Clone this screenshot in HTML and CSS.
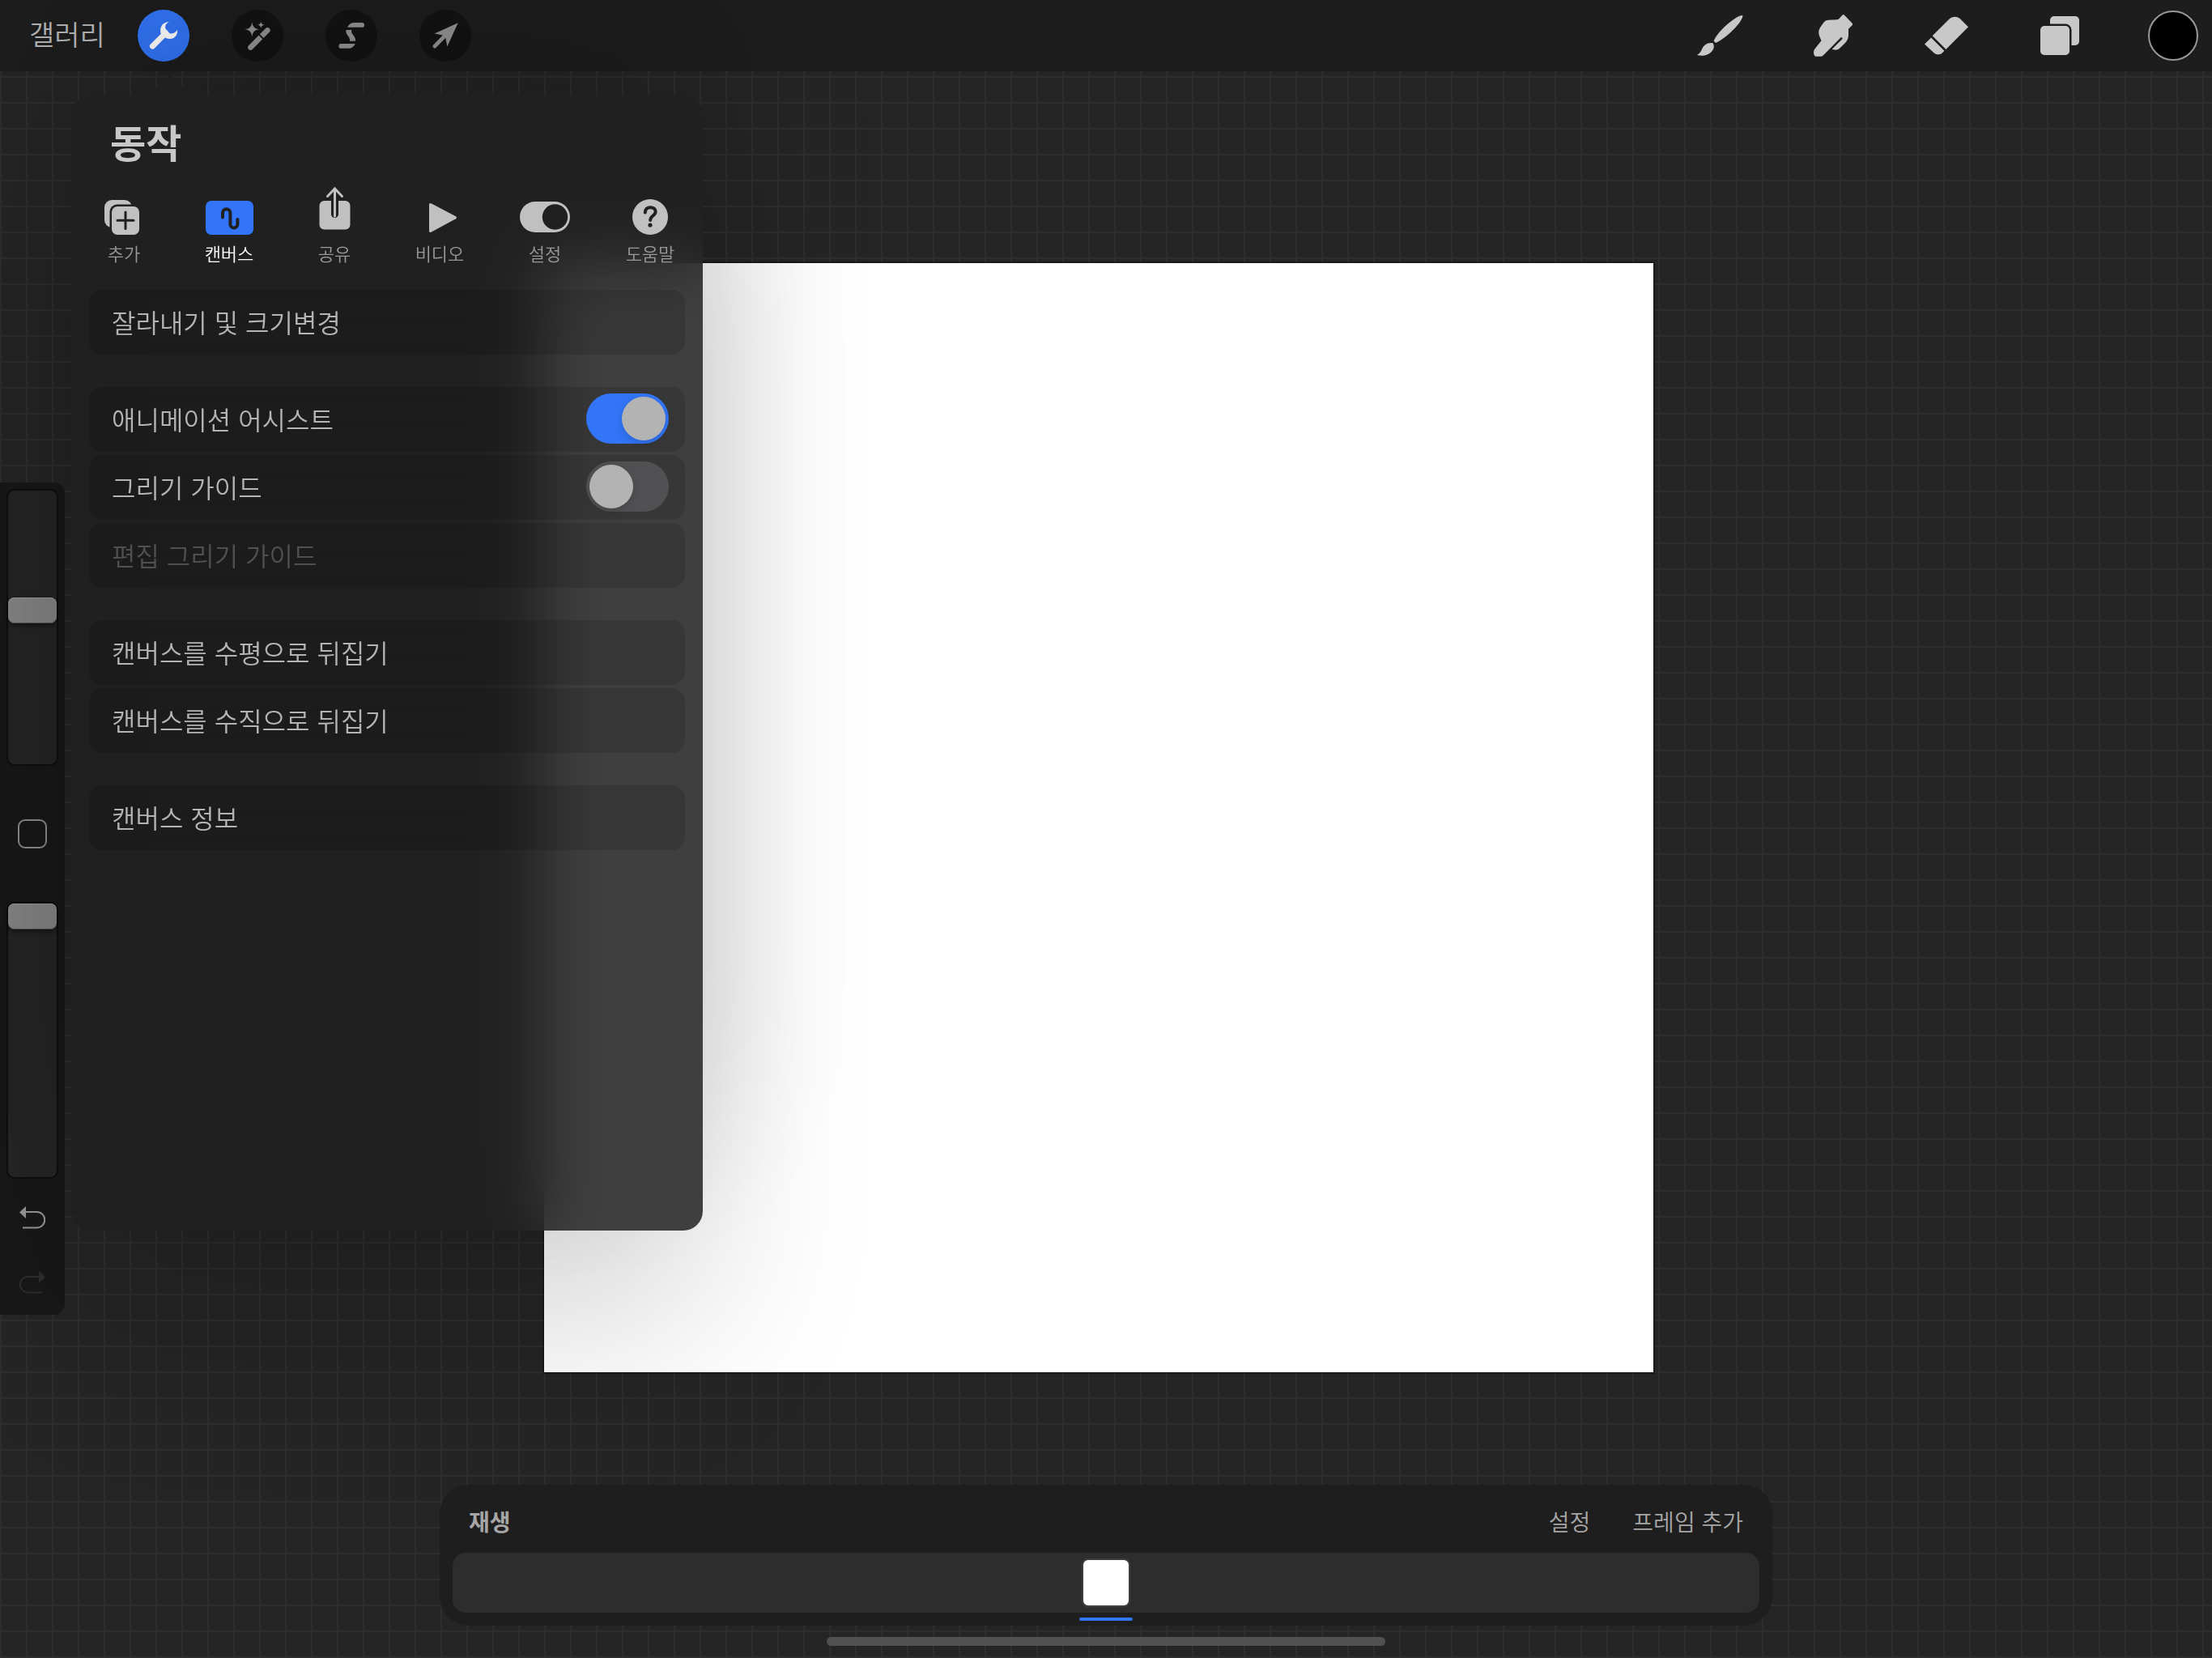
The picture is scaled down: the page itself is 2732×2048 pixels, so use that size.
FILE: index.html
```html
<!DOCTYPE html>
<html lang="ko">
<head>
<meta charset="utf-8">
<meta name="viewport" content="width=device-width, initial-scale=1">
<title>동작</title>
<link rel="stylesheet" href="styles.css">
</head>
<body>
<header class="topbar">
  <button class="gallery" type="button">갤러리</button>
  <nav class="tools">
    <button class="tool tool-active" type="button" aria-label="동작">
      <svg viewBox="0 0 64 64"><path d="M39 15C35 16.5 33.5 20 34.5 23.5L40 29.5C43 29.8 47 28.5 48.8 25C50 30 46.5 35.8 40 36C37.5 36.2 35.5 35.4 33.8 34.6L21 47.6A3.6 3.6 0 0 1 16 42.4L28.8 29.8C27 24 28.5 15.5 39 15Z"/></svg>
    </button>
    <button class="tool" type="button" aria-label="조정">
      <svg viewBox="0 0 64 64"><path d="M25.3 15.5Q26 23.6 34 24.3Q26 25 25.3 33.1Q24.6 25 16.5 24.3Q24.6 23.6 25.3 15.5ZM36.3 14.5Q36.7 18.3 40.4 18.7Q36.7 19.1 36.3 22.9Q35.9 19.1 32.2 18.7Q35.9 18.3 36.3 14.5Z"/><path class="wand" d="M23.4 46.6L44.4 25.4"/><path class="wand-gap" d="M33.5 30.2L39.8 36.5"/></svg>
    </button>
    <button class="tool" type="button" aria-label="선택">
      <svg viewBox="0 0 64 64"><path d="M27 21.8C29 18 31.5 16 35.5 16H45.2A2.9 2.9 0 0 1 45.2 21.8ZM25.4 25H32.3C31.8 27 32.2 28.4 33.5 30.3C36 33.8 37.3 35.5 37 38.8H30C30.2 36.5 29.8 35 28.3 33C26 30 25 28 25.4 25ZM19.3 42H36.8C35 45.8 32.5 47.8 28.5 47.8H19.3A2.9 2.9 0 0 1 19.3 42Z"/></svg>
    </button>
    <button class="tool" type="button" aria-label="변형">
      <svg viewBox="0 0 64 64"><path d="M47.7 16.2L34.4 45.4L32.3 34.8L20.6 46.8A2.4 2.4 0 0 1 17.2 43.4L28.9 31.6L18.6 29.6Z"/></svg>
    </button>
  </nav>
  <nav class="brushes">
    <button class="brush" type="button" aria-label="그리기">
      <svg viewBox="0 0 64 64"><path d="M60.3 7C61 9.5 57 16 51 22.5C43 31 34 38 27 41L24.5 38.6C27 33 33 25 42 17.5C49 11.5 57 6.5 60.3 7ZM23.5 41.2C26.5 46 24 51 18.5 54.5C14 57.3 8 57.3 4 56C6.5 54.5 8 53 9.5 50C12 43.5 17 40.3 23.5 41.2Z"/></svg>
    </button>
    <button class="brush" type="button" aria-label="스머지">
      <svg viewBox="0 0 64 64"><path d="M43.6 6.6Q44.7 5.6 45.8 6.6L55.6 16.8Q56.5 18 55.6 19.2L51 23.8V31.5C51 36 49 39 46 42L39.5 48.3C37.5 50 33 50 30.7 48.7L43.2 36.2C44.2 35 42.7 33.6 41.4 34.6L20 56.2Q18.5 57.8 16.5 57.8H11Q9 57.8 8.5 55.5C7.8 53 7.8 51 9 49L17.5 38.3C16 34 14.3 32 14.3 28.5C14.3 24 16 22 18.5 18.5C21 15 22 12.9 26.3 12.7L36.5 12.2Q38.3 12.1 39.5 10.9Z"/></svg>
    </button>
    <button class="brush" type="button" aria-label="지우기">
      <svg viewBox="0 0 64 64"><path d="M59 21.3L31.4 49L14.7 32.3L35 12C39.5 7.8 45.5 7.8 49.5 11.7ZM13.1 34.5L29.4 50.8L27 53.2C24 56 19.5 56 16.5 53.3L5 42.4Z"/></svg>
    </button>
    <button class="brush" type="button" aria-label="레이어">
      <svg viewBox="0 0 64 64"><rect x="20" y="8" width="36" height="36" rx="5"/><rect class="layer-gap" x="7" y="19" width="38" height="38" rx="6"/><rect x="8" y="20" width="36" height="36" rx="5"/></svg>
    </button>
    <button class="brush" type="button" aria-label="색상"><span class="swatch"></span></button>
  </nav>
</header>

<main class="stage">
  <div class="canvas"></div>
</main>

<aside class="sidebar">
  <input class="slider" type="range" min="0" max="100" value="57" aria-label="브러시 크기">
  <button class="modify" type="button" aria-label="수정"></button>
  <input class="slider" type="range" min="0" max="100" value="100" aria-label="불투명도">
  <div class="history">
    <button class="step" type="button" aria-label="실행 취소">
      <svg viewBox="0 0 32 28"><path class="step-line" d="M6 7H21.5A9 9 0 0 1 21.5 26.5H4"/><path d="M0 7.5L8 0V15Z"/></svg>
    </button>
    <button class="step" type="button" aria-label="다시 실행" disabled>
      <svg viewBox="0 0 32 28"><path class="step-line" d="M26 7H10.5A9 9 0 0 0 10.5 26.5H28"/><path d="M32 7.5L24 0V15Z"/></svg>
    </button>
  </div>
</aside>

<section class="popover">
  <h1 class="title">동작</h1>
  <nav class="tabs">
    <button class="tab" type="button">
      <svg viewBox="0 0 64 64"><rect x="8" y="17" width="34" height="34" rx="9"/><rect class="knock" x="14.5" y="22.5" width="39" height="40" rx="9"/><rect x="17" y="25" width="34" height="35" rx="7"/><path class="plus" d="M34 32V52.5M24 42.3H44"/></svg>
      추가
    </button>
    <button class="tab tab-active" type="button">
      <svg viewBox="0 0 64 64"><rect x="3" y="18" width="59" height="42" rx="7"/><path class="squiggle" d="M24 38.5V33A4.7 4.7 0 0 1 33.4 33V47A4.5 4.5 0 0 0 42.4 47V41"/></svg>
      캔버스
    </button>
    <button class="tab" type="button">
      <svg viewBox="0 0 64 64"><rect x="13.5" y="18" width="38" height="35.5" rx="6"/><path class="shaft-gap" d="M32.5 16V34.5"/><path class="shaft" d="M32.5 37V3M23.5 12.5L32.5 3L41.5 12.5"/></svg>
      공유
    </button>
    <button class="tab" type="button">
      <svg viewBox="0 0 64 64"><path d="M19 23Q19 20 22 21.5L52 37.3Q54 38.8 52 40.3L22 56.5Q19 58 19 55Z"/></svg>
      비디오
    </button>
    <button class="tab" type="button">
      <svg viewBox="0 0 64 64"><rect x="1" y="19" width="62" height="38" rx="19"/><circle class="knock" cx="44.5" cy="38" r="15.7"/></svg>
      설정
    </button>
    <button class="tab" type="button">
      <svg viewBox="0 0 64 64"><circle cx="32" cy="38" r="22"/><path class="query" d="M25.8 32.5C25.8 28.3 28.5 26.2 32.2 26.2C36 26.2 38.7 28.3 38.7 31.6C38.7 36.2 32.2 36.5 32.2 42"/><circle class="knock" cx="32" cy="48" r="2.6"/></svg>
      도움말
    </button>
  </nav>
  <div class="groups">
    <div class="group">
      <button class="row" type="button">잘라내기 및 크기변경</button>
    </div>
    <div class="group">
      <label class="row">애니메이션 어시스트<input class="switch" type="checkbox" role="switch" checked></label>
      <label class="row">그리기 가이드<input class="switch" type="checkbox" role="switch"></label>
      <button class="row" type="button" disabled>편집 그리기 가이드</button>
    </div>
    <div class="group">
      <button class="row" type="button">캔버스를 수평으로 뒤집기</button>
      <button class="row" type="button">캔버스를 수직으로 뒤집기</button>
    </div>
    <div class="group">
      <button class="row" type="button">캔버스 정보</button>
    </div>
  </div>
</section>

<section class="timeline">
  <div class="timeline-bar">
    <button class="timeline-action play" type="button">재생</button>
    <button class="timeline-action" type="button">설정</button>
    <button class="timeline-action" type="button">프레임 추가</button>
  </div>
  <div class="track">
    <button class="frame" type="button" aria-label="프레임 1"></button>
  </div>
</section>
<div class="home-indicator"></div>
</body>
</html>
```
FILE: styles.css
```css
:root {
  --bar: #1d1d1d;
  --panel: #202020;
  --icon: #c8c8c8;
  --accent: #3275f8;
}

* {
  box-sizing: border-box;
}

body {
  position: relative;
  display: flex;
  flex-direction: column;
  min-height: 100vh;
  margin: 0;
  overflow: hidden;
  color: #b4b4b4;
  font-family: "Noto Sans CJK KR", "Noto Sans", sans-serif;
  background-color: #252525;
  background-image:
    linear-gradient(to right, #2e2e2e 2px, transparent 2px),
    linear-gradient(to bottom, #2e2e2e 2px, transparent 2px);
  background-size: 32px 32px;
  background-position: 0 0, 0 30px;
}

button {
  margin: 0;
  padding: 0;
  border: 0;
  background: none;
  color: inherit;
  font: inherit;
}

svg {
  display: block;
  fill: currentColor;
}

/* Top bar */

.topbar {
  display: flex;
  align-items: center;
  height: 88px;
  padding: 0 16px 0 36px;
  background: var(--bar);
}

.gallery {
  padding-bottom: 4px;
  font-size: 34px;
  line-height: 48px;
  font-weight: 350;
}

.tools {
  display: flex;
  gap: 52px;
  margin-left: 40px;
}

.tool {
  width: 64px;
  height: 64px;
  border-radius: 50%;
  background: #131313;
  color: #949494;
}

.tool-active {
  background: var(--accent);
  color: #fff;
}

.wand {
  fill: none;
  stroke: currentColor;
  stroke-width: 6.5;
  stroke-linecap: round;
}

.wand-gap {
  stroke: #131313;
  stroke-width: 1.8;
}

.brushes {
  display: flex;
  gap: 76px;
  margin-left: auto;
}

.brush {
  display: flex;
  align-items: center;
  justify-content: center;
  width: 64px;
  height: 64px;
  color: var(--icon);
}

.brush svg {
  width: 64px;
}

.layer-gap {
  fill: none;
  stroke: var(--bar);
  stroke-width: 3;
}

.swatch {
  width: 62px;
  height: 62px;
  border: 2px solid #999;
  border-radius: 50%;
  background: #000;
}

/* Drawing area */

.stage {
  display: flex;
  flex: 1;
  align-items: flex-start;
  justify-content: center;
  padding: 237px 18px 0 0;
}

.canvas {
  width: 1370px;
  max-width: 100%;
  aspect-ratio: 1;
  background: #fff;
  box-shadow: 0 0 0 2px rgba(0, 0, 0, 0.35);
}

/* Side bar */

.sidebar {
  position: absolute;
  top: 596px;
  left: 0;
  display: flex;
  flex-direction: column;
  align-items: center;
  width: 80px;
  padding-top: 8px;
  border-radius: 0 14px 14px 0;
  background: #181818;
}

.slider {
  width: 64px;
  height: 342px;
  margin: 0;
  border: 2px solid #0e0e0e;
  border-radius: 10px;
  background: #252525;
  appearance: none;
  writing-mode: vertical-lr;
  direction: rtl;
}

.slider::-webkit-slider-thumb {
  width: 60px;
  height: 32px;
  border-radius: 8px;
  background: #868686;
  box-shadow: 0 2px 6px rgba(0, 0, 0, 0.6), inset 0 1px 0 #9a9a9a, inset 0 -1px 0 #555;
  appearance: none;
}

.modify {
  width: 36px;
  height: 36px;
  margin: 66px 0;
  border: 2px solid #8c8c8c;
  border-radius: 9px;
}

.history {
  margin-top: 8px;
}

.step {
  display: flex;
  align-items: center;
  justify-content: center;
  width: 80px;
  height: 80px;
  color: #979797;
}

.step:disabled {
  color: #2d2d2d;
}

.step svg {
  width: 32px;
  height: 28px;
}

.step-line {
  fill: none;
  stroke: currentColor;
  stroke-width: 2;
}

/* Actions popover */

.popover {
  position: absolute;
  top: 118px;
  left: 88px;
  width: 780px;
  min-height: 1402px;
  padding-top: 26px;
  border-radius: 24px;
  background: rgba(31, 31, 31, 0.86);
  backdrop-filter: blur(40px);
  box-shadow:
    0 120px 220px rgba(0, 0, 0, 0.16),
    0 -120px 220px rgba(0, 0, 0, 0.16);
}

.popover::before {
  content: "";
  position: absolute;
  bottom: 100%;
  left: 96px;
  width: 52px;
  height: 26px;
  background: var(--panel);
  clip-path: polygon(50% 0, 100% 100%, 0 100%);
}

.title {
  margin: 0;
  padding-left: 48px;
  color: #c8c8c8;
  font-size: 48px;
  line-height: 60px;
  font-weight: 700;
}

.tabs {
  display: grid;
  grid-template-columns: repeat(6, 1fr);
  margin-top: 26px;
}

.tab {
  display: flex;
  flex-direction: column;
  align-items: center;
  gap: 2px;
  color: #999;
  font-size: 22px;
  line-height: 32px;
  font-weight: 350;
}

.tab svg {
  width: 64px;
  height: 64px;
  color: #c0c0c0;
}

.tab-active {
  color: #fff;
}

.tab-active svg {
  color: var(--accent);
}

.knock {
  fill: var(--panel);
}

.plus,
.squiggle,
.shaft,
.shaft-gap,
.query {
  fill: none;
  stroke: var(--panel);
  stroke-width: 3;
  stroke-linecap: round;
}

.squiggle,
.query {
  stroke-width: 4;
}

.shaft-gap {
  stroke-width: 9;
}

.shaft {
  stroke: currentColor;
}

.groups {
  display: flex;
  flex-direction: column;
  gap: 40px;
  padding: 30px 22px;
}

.group {
  display: flex;
  flex-direction: column;
  gap: 4px;
}

.row {
  display: flex;
  align-items: center;
  justify-content: space-between;
  height: 80px;
  padding: 0 20px 3px 28px;
  border-radius: 16px;
  background: rgba(0, 0, 0, 0.12);
  font-size: 32px;
  line-height: 48px;
  font-weight: 350;
}

.row:disabled {
  color: #505050;
}

.switch {
  width: 102px;
  height: 62px;
  margin: 0;
  padding: 4px;
  border-radius: 31px;
  background: #515153;
  appearance: none;
}

.switch::before {
  content: "";
  display: block;
  width: 54px;
  height: 54px;
  border-radius: 50%;
  background: #b3b3b3;
  box-shadow: 0 4px 12px rgba(0, 0, 0, 0.15);
}

.switch:checked {
  background: var(--accent);
}

.switch:checked::before {
  margin-left: auto;
}

/* Animation timeline */

.timeline {
  position: absolute;
  right: 0;
  bottom: 40px;
  left: 0;
  width: 1646px;
  max-width: 100%;
  margin: 0 auto;
  padding: 0 16px 16px;
  border-radius: 36px;
  background: #1e1e1e;
}

.timeline-bar {
  display: flex;
  align-items: center;
  gap: 52px;
  height: 84px;
  padding: 6px 20px 0;
}

.timeline-action {
  color: #a6a6a6;
  font-size: 28px;
  line-height: 40px;
  font-weight: 350;
}

.play {
  margin-right: auto;
  font-weight: 700;
}

.track {
  display: flex;
  align-items: center;
  justify-content: center;
  height: 74px;
  border-radius: 16px;
  background: #2d2d2d;
}

.frame {
  position: relative;
  width: 60px;
  height: 60px;
  border: 2px solid #3e3e3e;
  border-radius: 8px;
  background: #fff;
}

.frame::after {
  content: "";
  position: absolute;
  top: 71px;
  left: -5px;
  width: 66px;
  height: 4px;
  border-radius: 2px;
  background: var(--accent);
}

.home-indicator {
  position: absolute;
  right: 0;
  bottom: 15px;
  left: 0;
  width: 690px;
  max-width: 100%;
  height: 11px;
  margin: 0 auto;
  border-radius: 6px;
  background: #505050;
}
```
